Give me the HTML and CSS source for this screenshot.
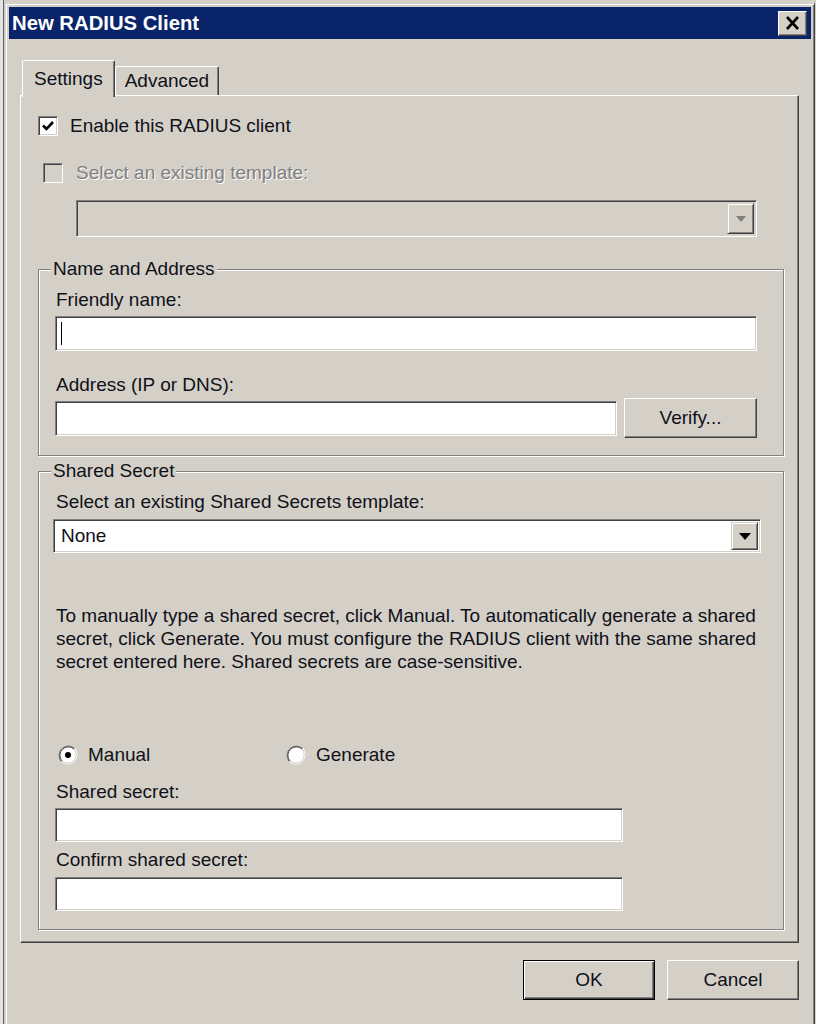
FILE: index.html
```html
<html>
	<head>
		<link rel="stylesheet" href="styles.css">
	</head>
	<body>
		<div class="screen">
			<div class="backWindow"></div>
			<div class="dialog">
				<div class="titleBar">
					<span class="title">New RADIUS Client</span>
					<div class="closeBtn">
						<svg width="15" height="14" viewBox="0 0 15 14"><path d="M2 1 L13 13 M13 1 L2 13" stroke="#000" stroke-width="2.6" fill="none"/></svg>
					</div>
				</div>
				<div class="dialogBody">
					<div class="tabs">
						<div class="tab active">Settings</div>
						<div class="tab">Advanced</div>
					</div>
					<div class="tabPanel">
						<div class="checkRow">
							<span class="checkBox">
								<svg width="14" height="14" viewBox="0 0 14 14"><path d="M2 6.5 L5.5 10 L12 3" stroke="#000" stroke-width="2.6" fill="none"/></svg>
							</span>
							Enable this RADIUS client
						</div>
						<div class="checkRow disabled">
							<span class="checkBox"></span>
							Select an existing template:
						</div>
						<div class="combo disabled topCombo">
							<span class="comboText"></span>
							<span class="comboBtn">
								<svg width="10" height="6" viewBox="0 0 10 6"><path d="M0 0 H10 L5 6 Z" fill="#808080"/></svg>
							</span>
						</div>

						<fieldset class="group nameGroup">
							<legend>Name and Address</legend>
							<div class="fieldLabel">Friendly name:</div>
							<div class="textBox friendly"><span class="caret"></span></div>
							<div class="fieldLabel addrLabel">Address (IP or DNS):</div>
							<div class="addrRow">
								<div class="textBox addr"></div>
								<div class="button verify">Verify...</div>
							</div>
						</fieldset>

						<fieldset class="group secretGroup">
							<legend>Shared Secret</legend>
							<div class="fieldLabel">Select an existing Shared Secrets template:</div>
							<div class="combo secretCombo">
								<span class="comboText">None</span>
								<span class="comboBtn">
									<svg width="12" height="7" viewBox="0 0 12 7"><path d="M0 0 H12 L6 7 Z" fill="#000"/></svg>
								</span>
							</div>
							<div class="helpText">
								To manually type a shared secret, click Manual. To automatically generate a shared<br>
								secret, click Generate. You must configure the RADIUS client with the same shared<br>
								secret entered here. Shared secrets are case-sensitive.
							</div>
							<div class="radioRow">
								<div class="radioItem first">
									<svg class="radio" width="20" height="20" viewBox="0 0 20 20">
										<circle cx="10" cy="10" r="8.5" fill="#fff"/>
										<path d="M3.3 16.7 A9.5 9.5 0 0 1 16.7 3.3" stroke="#808080" fill="none"/>
										<path d="M16.7 3.3 A9.5 9.5 0 0 1 3.3 16.7" stroke="#fff" fill="none"/>
										<path d="M4 16 A8.5 8.5 0 0 1 16 4" stroke="#404040" fill="none"/>
										<path d="M16 4 A8.5 8.5 0 0 1 4 16" stroke="#d4d0c8" fill="none"/>
										<circle cx="10" cy="10" r="3" fill="#000"/>
									</svg>
									Manual
								</div>
								<div class="radioItem">
									<svg class="radio" width="20" height="20" viewBox="0 0 20 20">
										<circle cx="10" cy="10" r="8.5" fill="#fff"/>
										<path d="M3.3 16.7 A9.5 9.5 0 0 1 16.7 3.3" stroke="#808080" fill="none"/>
										<path d="M16.7 3.3 A9.5 9.5 0 0 1 3.3 16.7" stroke="#fff" fill="none"/>
										<path d="M4 16 A8.5 8.5 0 0 1 16 4" stroke="#404040" fill="none"/>
										<path d="M16 4 A8.5 8.5 0 0 1 4 16" stroke="#d4d0c8" fill="none"/>
									</svg>
									Generate
								</div>
							</div>
							<div class="fieldLabel secretLabel">Shared secret:</div>
							<div class="textBox secret"></div>
							<div class="fieldLabel confirmLabel">Confirm shared secret:</div>
							<div class="textBox secret confirm"></div>
						</fieldset>
					</div>
					<div class="buttonRow">
						<div class="button default">OK</div>
						<div class="button">Cancel</div>
					</div>
				</div>
			</div>
		</div>
	</body>
</html>
```

FILE: styles.css
```css
html, body {
	margin: 0;
	padding: 0;
	background: #d4d0c8;
	overflow: hidden;
}

body {
	font-family: "Liberation Sans", Arial, sans-serif;
	font-size: 19px;
	color: #101018;
}

.screen {
	display: flex;
	height: 1024px;
}

.backWindow {
	width: 3px;
	flex: none;
	background: #e4e4e4;
	border-right: 1px solid #606060;
}

.dialog {
	margin: 3px 0 0 1px;
	width: 810px;
	height: 1040px;
	box-sizing: border-box;
	flex: none;
	padding: 3px;
	background: #d4d0c8;
	border: 1px solid;
	border-color: #d4d0c8 #404040 #404040 #d4d0c8;
	box-shadow: inset 1px 1px #fff, inset -1px -1px #808080;
}

.titleBar {
	height: 32px;
	background: #0a246a;
	display: flex;
	align-items: center;
	justify-content: space-between;
	padding: 0 4px 0 3px;
}

.title {
	color: #fff;
	font-weight: bold;
	font-size: 20.3px;
}

.closeBtn {
	width: 29px;
	height: 25px;
	box-sizing: border-box;
	background: #d4d0c8;
	border: 1px solid;
	border-color: #fff #404040 #404040 #fff;
	box-shadow: inset -1px -1px #808080;
	display: flex;
	align-items: center;
	justify-content: center;
}

.dialogBody {
	padding: 21px 12px 0 11px;
}

/* tabs */
.tabs {
	display: flex;
	align-items: flex-end;
	height: 35px;
	padding-left: 2px;
}

.tab {
	height: 29px;
	box-sizing: border-box;
	padding: 0 9px;
	border: 1px solid;
	border-color: #fff #404040 transparent #fff;
	border-bottom: none;
	border-radius: 2px 2px 0 0;
	box-shadow: inset -1px 0 #808080;
	display: flex;
	align-items: center;
}

.tab.active {
	height: 37px;
	margin-bottom: -2px;
	padding: 0 11px;
	position: relative;
	z-index: 1;
	background: #d4d0c8;
}

.tabPanel {
	display: flex;
	flex-direction: column;
	padding: 19px 14px 12px 17px;
	border: 1px solid;
	border-color: #fff #404040 #404040 #fff;
	box-shadow: inset -1px -1px #808080;
}

/* checkboxes */
.checkRow {
	display: flex;
	align-items: center;
	height: 22px;
}

.checkBox {
	width: 20px;
	height: 20px;
	box-sizing: border-box;
	margin-right: 12px;
	background: #fff;
	border: 1px solid;
	border-color: #808080 #fff #fff #808080;
	box-shadow: inset 1px 1px #404040, inset -1px -1px #d4d0c8;
	display: flex;
	align-items: center;
	justify-content: center;
}

.checkRow.disabled {
	margin-top: 25px;
	color: #808080;
	text-shadow: 1px 1px #fff;
}

.checkRow.disabled .checkBox {
	margin-left: 5px;
	margin-right: 13px;
	background: #d4d0c8;
}

/* combo boxes */
.combo {
	display: flex;
	box-sizing: border-box;
	padding: 2px;
	background: #fff;
	border: 1px solid;
	border-color: #808080 #fff #fff #808080;
	box-shadow: inset 1px 1px #404040, inset -1px -1px #d4d0c8;
}

.combo.disabled {
	background: #d4d0c8;
}

.comboText {
	flex: 1;
	padding-left: 5px;
	display: flex;
	align-items: center;
}

.comboBtn {
	width: 27px;
	box-sizing: border-box;
	background: #d4d0c8;
	border: 1px solid;
	border-color: #d4d0c8 #404040 #404040 #d4d0c8;
	box-shadow: inset 1px 1px #fff, inset -1px -1px #808080;
	display: flex;
	align-items: center;
	justify-content: center;
}

.topCombo {
	margin: 16px 0 0 38px;
	width: 681px;
	height: 37px;
}

.secretCombo {
	margin: 6px 0 0 -2px;
	width: 708px;
	height: 34px;
}

/* group boxes */
.group {
	margin: 0;
	min-width: 0;
	padding: 9px 26px 17px 16px;
	border: 1px solid #808080;
	box-shadow: inset 1px 1px #fff, 1px 1px #fff;
}

.group legend {
	margin-left: -4px;
	padding: 0 2px;
	line-height: 22px;
	background: #d4d0c8;
}

.nameGroup {
	margin-top: 21px;
}

.secretGroup {
	margin-top: 4px;
	padding-bottom: 18px;
}

.fieldLabel {
	line-height: 22px;
	padding-left: 1px;
}

.textBox {
	height: 35px;
	box-sizing: border-box;
	background: #fff;
	border: 1px solid;
	border-color: #808080 #fff #fff #808080;
	box-shadow: inset 1px 1px #404040, inset -1px -1px #d4d0c8;
	display: flex;
	align-items: center;
}

.friendly {
	margin-top: 5px;
}

.caret {
	width: 1px;
	height: 23px;
	margin-left: 5px;
	background: #000;
}

.addrLabel {
	margin-top: 23px;
}

.addrRow {
	margin-top: 2px;
	height: 40px;
	display: flex;
	align-items: center;
	gap: 7px;
}

.addr {
	width: 562px;
}

.button {
	height: 40px;
	width: 132px;
	box-sizing: border-box;
	background: #d4d0c8;
	border: 1px solid;
	border-color: #fff #404040 #404040 #fff;
	box-shadow: inset -1px -1px #808080;
	display: flex;
	align-items: center;
	justify-content: center;
}

.verify {
	flex: 1;
}

.helpText {
	margin-top: 51px;
	line-height: 23px;
	padding-left: 1px;
}

.radioRow {
	margin-top: 71px;
	height: 22px;
	display: flex;
	align-items: center;
}

.radioItem {
	display: flex;
	align-items: center;
}

.radioItem.first {
	width: 228px;
	margin-left: 3px;
}

.radio {
	margin-right: 10px;
}

.secretLabel {
	margin-top: 15px;
}

.secret {
	margin-top: 5px;
	width: 568px;
	height: 34px;
}

.confirmLabel {
	margin-top: 7px;
}

.secret.confirm {
	margin-top: 6px;
}

.buttonRow {
	margin-top: 17px;
	display: flex;
	justify-content: flex-end;
	gap: 12px;
}

.button.default {
	border: 1px solid #000;
	box-shadow: inset 1px 1px #fff, inset -1px -1px #404040, inset -2px -2px #808080;
}
```
